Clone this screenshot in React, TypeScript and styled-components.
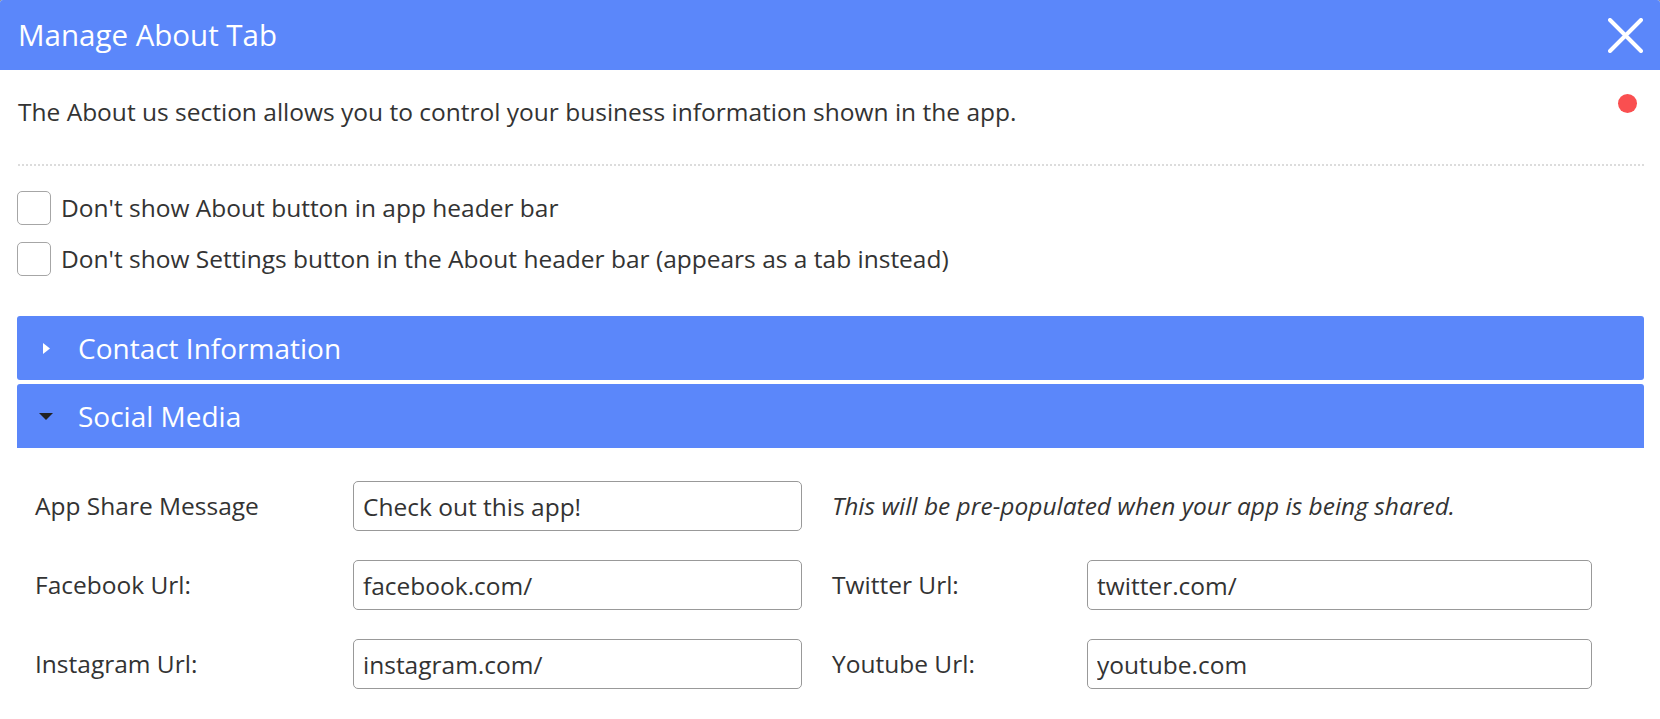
import React from "react";
import styled, { createGlobalStyle } from "styled-components";

const Global = createGlobalStyle`
  html, body { margin: 0; padding: 0; background: #8a8a8a; }
  body { font-family: "Open Sans", "Noto Sans", sans-serif; color: #333; }
  * { box-sizing: border-box; }
`;

const Modal = styled.div`
  width: 1660px;
  height: 719px;
  background: #fff;
  border-radius: 3px 3px 0 0;
  overflow: hidden;
`;

const Header = styled.div`
  height: 70px;
  background: #5b87fa;
  display: flex;
  align-items: center;
  justify-content: space-between;
  padding: 0 17px 0 18px;
`;

const Title = styled.h1`
  margin: 0;
  font-size: 29.5px;
  font-weight: 400;
  color: #fff;
  line-height: 1;
`;

const CloseButton = styled.button`
  width: 35px;
  height: 35px;
  padding: 0;
  border: 0;
  background: none;
  display: flex;
  cursor: pointer;
`;

const Body = styled.div`
  padding: 0 16px 0 17px;
`;

const IntroRow = styled.div`
  display: flex;
  justify-content: space-between;
  align-items: flex-start;
  padding: 26px 0 0 1px;
  height: 94px;
`;

const Intro = styled.p`
  margin: 0;
  font-size: 24.5px;
  line-height: 32px;
`;

const StatusDot = styled.span`
  width: 19px;
  height: 19px;
  border-radius: 50%;
  background: #fa4f50;
  margin: -2px 7px 0 0;
`;

const Divider = styled.hr`
  margin: 0 0 0 1px;
  border: 0;
  border-top: 2px dotted #dcdcdc;
`;

const Options = styled.div`
  display: flex;
  flex-direction: column;
  gap: 17px;
  padding-top: 25px;
`;

const CheckRow = styled.label`
  display: flex;
  align-items: center;
  gap: 10px;
  font-size: 24.5px;
  line-height: 34px;
  cursor: pointer;
`;

const Box = styled.span`
  width: 34px;
  height: 34px;
  border: 1px solid #a6a6a6;
  border-radius: 5px;
  background: #fff;
  flex: none;
`;

const Accordion = styled.div`
  margin-top: 40px;
  display: flex;
  flex-direction: column;
  gap: 4px;
`;

const PanelHead = styled.div<{ $open?: boolean }>`
  height: 64px;
  background: #5b87fa;
  border-radius: ${(p) => (p.$open ? "3px 3px 0 0" : "3px")};
  display: flex;
  align-items: center;
  padding-left: 22px;
  color: #fff;
  font-size: 28px;
`;

const Caret = styled.span`
  width: 14px;
  margin-right: 25px;
  display: flex;
  justify-content: center;
`;

const Form = styled.div`
  display: grid;
  grid-template-columns: 288px 449px 225px 505px;
  grid-auto-rows: 50px;
  column-gap: 30px;
  row-gap: 29px;
  padding: 33px 0 0 18px;
  align-items: center;
  font-size: 24.5px;
`;

const Label = styled.span`
  line-height: 30px;
`;

const Input = styled.input`
  height: 50px;
  width: 100%;
  border: 1px solid #999;
  border-radius: 5px;
  padding: 0 9px;
  font-family: inherit;
  font-size: 24.5px;
  color: #333;
  outline: none;
`;

const Help = styled.span`
  grid-column: span 2;
  font-style: italic;
  line-height: 30px;
`;

function CheckOption({ children }: { children: React.ReactNode }) {
  return (
    <CheckRow>
      <Box />
      <span>{children}</span>
    </CheckRow>
  );
}

export default function App() {
  return (
    <>
      <Global />
      <Modal>
        <Header>
          <Title>Manage About Tab</Title>
          <CloseButton aria-label="Close">
            <svg width="35" height="35" viewBox="0 0 35 35">
              <path d="M2 2 L33 33 M33 2 L2 33" stroke="#fff" strokeWidth="4" strokeLinecap="round" />
            </svg>
          </CloseButton>
        </Header>
        <Body>
          <IntroRow>
            <Intro>The About us section allows you to control your business information shown in the app.</Intro>
            <StatusDot />
          </IntroRow>
          <Divider />
          <Options>
            <CheckOption>Don't show About button in app header bar</CheckOption>
            <CheckOption>Don't show Settings button in the About header bar (appears as a tab instead)</CheckOption>
          </Options>
          <Accordion>
            <PanelHead>
              <Caret>
                <svg width="7" height="11" viewBox="0 0 7 11">
                  <path d="M0 0 L7 5.5 L0 11 Z" fill="#fff" />
                </svg>
              </Caret>
              Contact Information
            </PanelHead>
            <div>
              <PanelHead $open>
                <Caret>
                  <svg width="14" height="7" viewBox="0 0 14 7">
                    <path d="M0 0 L14 0 L7 7 Z" fill="#222" />
                  </svg>
                </Caret>
                Social Media
              </PanelHead>
              <Form>
                <Label>App Share Message</Label>
                <Input defaultValue="Check out this app!" />
                <Help>This will be pre-populated when your app is being shared.</Help>
                <Label>Facebook Url:</Label>
                <Input defaultValue="facebook.com/" />
                <Label>Twitter Url:</Label>
                <Input defaultValue="twitter.com/" />
                <Label>Instagram Url:</Label>
                <Input defaultValue="instagram.com/" />
                <Label>Youtube Url:</Label>
                <Input defaultValue="youtube.com" />
              </Form>
            </div>
          </Accordion>
        </Body>
      </Modal>
    </>
  );
}
